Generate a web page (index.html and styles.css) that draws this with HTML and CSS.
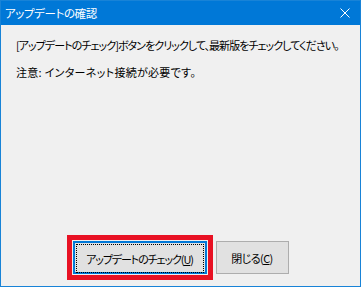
FILE: index.html
```html
<!DOCTYPE html>
<html lang="ja">
<head>
    <meta charset="UTF-8">
    <title>アップデートの確認</title>
    <link rel="stylesheet" href="styles.css">
</head>
<body>
    <div class="window">
        <div class="titlebar">
            <span class="title">アップデートの確認</span>
            <svg class="close-icon" width="10" height="10" viewBox="0 0 10 10">
                <path d="M0.5 0.5 L9.5 9.5 M9.5 0.5 L0.5 9.5" stroke="#fff" stroke-width="1" fill="none"/>
            </svg>
        </div>
        <div class="content">
            <p class="message message-tight">[アップデートのチェック]ボタンをクリックして、最新版をチェックしてください。</p>
            <p class="message">注意: インターネット接続が必要です。</p>
        </div>
        <div class="buttons">
            <button type="button" class="button button-default"><span class="focus">アップデートのチェック(<u>U</u>)</span></button>
            <button type="button" class="button">閉じる(<u>C</u>)</button>
        </div>
    </div>
</body>
</html>
```

FILE: styles.css
```css
body {
    margin: 0;
    font-family: "Noto Sans CJK JP", "Noto Sans", sans-serif;
    font-size: 11px;
    font-feature-settings: "palt";
    color: #000;
}
.window {
    width: 361px;
    height: 287px;
    box-sizing: border-box;
    border: 1px solid #1883d7;
    background-color: #f0f0f0;
    display: flex;
    flex-direction: column;
}
.titlebar {
    height: 24px;
    background-color: #0078d7;
    color: #fff;
    display: flex;
    align-items: center;
    justify-content: space-between;
    padding: 0 10px 0 4px;
}
.title {
    font-size: 11.5px;
    letter-spacing: -0.4px;
}
.content {
    flex: 1;
    padding: 12px 15px 0 15px;
}
.message {
    margin: 0 0 10px 0;
    line-height: 17px;
    white-space: nowrap;
    letter-spacing: 0.3px;
}
.message-tight {
    letter-spacing: -0.95px;
}
.buttons {
    display: flex;
    justify-content: center;
    gap: 9px;
    margin-bottom: 12px;
}
.button {
    height: 33px;
    padding: 0 10px;
    background-color: #e1e1e1;
    border: 1px solid #adadad;
    font-family: inherit;
    font-size: 11px;
    font-feature-settings: "palt";
    letter-spacing: -0.6px;
    color: #000;
    min-width: 73px;
}
.button-default {
    width: 134px;
    border: 2px solid #0078d7;
    padding: 1px;
    outline: 5px solid #e81123;
    outline-offset: 1px;
    letter-spacing: -1.1px;
}
.focus {
    display: flex;
    align-items: center;
    justify-content: center;
    height: 100%;
    border: 1px dotted #000;
}
```
